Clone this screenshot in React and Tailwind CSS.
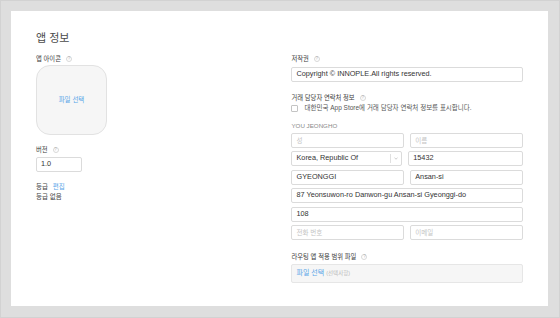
import React from "react";

const FONT = { fontFamily: "'Liberation Sans', 'Noto Sans CJK KR', sans-serif" };

function Help() {
  return (
    <span className="ml-[5px] inline-flex h-[6px] w-[6px] items-center justify-center rounded-full border border-[#d8d8d8] text-[4.5px] leading-none text-[#b4b4b4]">
      ?
    </span>
  );
}

function Label({ children, className = "" }) {
  return (
    <div className={"flex h-[8px] items-center text-[6.3px] font-normal leading-[8px] text-[#3a3a3a] " + className}>
      {children}
      <Help />
    </div>
  );
}

function Field({ children, placeholder, className = "" }) {
  return (
    <div
      className={
        "flex h-[15px] items-center rounded-[2px] border border-[#dbdbdb] bg-white px-[4px] " +
        (placeholder ? "text-[6.5px] text-[#c4c4c4] " : "text-[7.3px] text-[#333] ") +
        className
      }
    >
      {children}
    </div>
  );
}

export default function App() {
  return (
    <div
      style={FONT}
      className="h-[318px] w-[560px] border border-[#d2d2d2] bg-[#dedede] pb-[11px] pl-[10px] pr-[11px] pt-[10px]"
    >
      <div className="h-full bg-white px-[25px] pt-[20px]">
        <div className="h-[14px] text-[11px] leading-[14px] text-[#4a4a4a]">앱 정보</div>
        <div className="mt-[10px] flex">
          {/* left column */}
          <div className="w-[256px]">
            <Label>앱 아이콘</Label>
            <div className="mt-[2px] flex h-[70px] w-[71px] items-center justify-center rounded-[14px] border border-[#e2e2e2] bg-[#f6f6f6] text-[6.5px] text-[#5aa6e8]">
              파일 선택
            </div>
            <Label className="mt-[11px]">버전</Label>
            <div className="mt-[3px] w-[46px]">
              <Field>1.0</Field>
            </div>
            <div className="mt-[10px] text-[6.5px] leading-[10px] text-[#444]">
              <div>
                등급 <span className="ml-[3px] text-[#5aa6e8]">편집</span>
              </div>
              <div>등급 없음</div>
            </div>
          </div>
          {/* right column */}
          <div className="w-[232px]">
            <Label>저작권</Label>
            <div className="mt-[4px]">
              <Field className="h-[14px]">Copyright © INNOPLE.All rights reserved.</Field>
            </div>
            <Label className="mt-[12px]">거래 담당자 연락처 정보</Label>
            <div className="mt-[1px] flex h-[10px] items-center text-[6.5px] text-[#555]">
              <span className="mr-[6px] inline-block h-[7px] w-[7px] rounded-[1px] border border-[#c4c4c4] bg-white" />
              대한민국 App Store에 거래 담당자 연락처 정보를 표시합니다.
            </div>
            <div className="mt-[8px] h-[10px] text-[6.2px] leading-[10px] text-[#888]">YOU JEONGHO</div>
            <div className="mt-[2px] flex flex-col gap-[3.4px]">
              <div className="flex gap-[6px]">
                <Field placeholder className="flex-1">성</Field>
                <Field placeholder className="flex-1">이름</Field>
              </div>
              <div className="flex gap-[6px]">
                <div className="flex h-[15px] flex-1 items-center rounded-[2px] border border-[#dbdbdb] bg-white pl-[4px] text-[7.3px] text-[#333]">
                  <span className="flex-1">Korea, Republic Of</span>
                  <span className="h-[9px] w-px bg-[#e0e0e0]" />
                  <span className="flex w-[10px] justify-center">
                    <svg width="4" height="3" viewBox="0 0 4 3">
                      <path d="M0.5 0.8 L2 2.2 L3.5 0.8" fill="none" stroke="#aaa" strokeWidth="0.6" />
                    </svg>
                  </span>
                </div>
                <Field className="flex-1">15432</Field>
              </div>
              <div className="flex gap-[6px]">
                <Field className="flex-1">GYEONGGI</Field>
                <Field className="flex-1">Ansan-si</Field>
              </div>
              <Field>87 Yeonsuwon-ro Danwon-gu Ansan-si Gyeonggi-do</Field>
              <Field>108</Field>
              <div className="flex gap-[6px]">
                <Field placeholder className="flex-1">전화 번호</Field>
                <Field placeholder className="flex-1">이메일</Field>
              </div>
            </div>
            <Label className="mt-[13px]">라우팅 앱 적용 범위 파일</Label>
            <div className="mt-[3px] flex h-[19px] items-center rounded-[2px] border border-[#e6e6e6] bg-[#f6f6f6] px-[4px]">
              <span className="text-[7px] text-[#5aa6e8]">파일 선택</span>
              <span className="ml-[2px] text-[5.5px] text-[#b8b8b8]">(선택사항)</span>
            </div>
          </div>
        </div>
      </div>
    </div>
  );
}
